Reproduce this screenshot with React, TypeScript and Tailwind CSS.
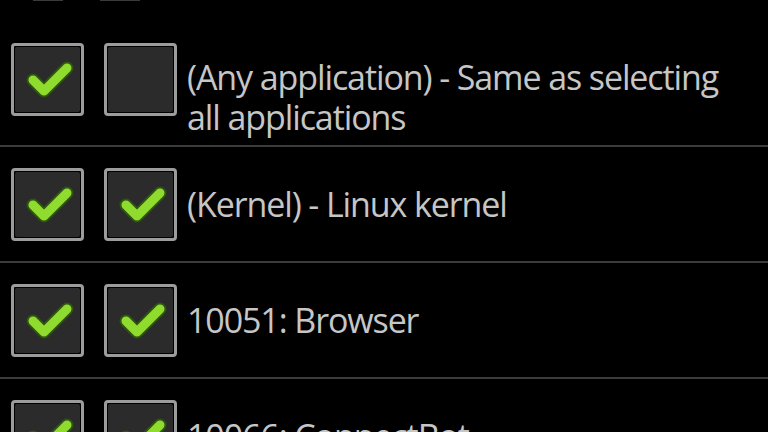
import React from "react";

const Check = () => (
  <svg viewBox="0 0 65 65" className="w-full h-full">
    <polyline
      points="18,33 29,44 52,21"
      fill="none"
      stroke="#2f5510"
      strokeWidth="13"
      strokeLinecap="round"
      strokeLinejoin="round"
    />
    <polyline
      points="18,33 29,44 52,21"
      fill="none"
      stroke="#8fdb2e"
      strokeWidth="9"
      strokeLinecap="round"
      strokeLinejoin="round"
    />
  </svg>
);

const Box = ({ checked }: { checked: boolean }) => (
  <div className="w-[73px] h-[73px] shrink-0 rounded-[4px] border-[3px] border-[#9c9c9c] bg-black p-[1px]">
    <div className="w-full h-full rounded-[2px] bg-[#2b2b2b]">{checked && <Check />}</div>
  </div>
);

const rows = [
  { a: true, b: true, text: ["(Kernel) - Linux kernel"] },
  { a: true, b: true, text: ["10051: Browser"] },
  { a: true, b: true, text: ["10066: ConnectBot"] },
];

export default function App() {
  return (
    <div
      className="w-[768px] h-[432px] overflow-hidden bg-black text-[#c6c6c6]"
      style={{ fontFamily: '"Open Sans", "DejaVu Sans", sans-serif' }}
    >
      {/* bits of the row above */}
      <div className="flex h-[13px] items-start">
        <div className="ml-[33px] w-[30px] h-[1px] bg-[#3a3a3a]" />
        <div className="ml-[37px] w-[40px] h-[1px] bg-[#3a3a3a]" />
      </div>

      {/* two-line row */}
      <div className="flex items-start pl-[11px] h-[132px]">
        <div className="mt-[30px] flex">
          <Box checked />
          <div className="w-[20px]" />
          <Box checked={false} />
        </div>
        <div className="ml-[10px] mt-[44px] text-[34px] leading-[40px] tracking-[-1.1px]">
          <div>(Any application) - Same as selecting</div>
          <div>all applications</div>
        </div>
      </div>
      <div className="h-[2px] bg-[#3c3c3c]" />

      {rows.map((r, i) => (
        <div key={i}>
          <div className="flex items-center pl-[11px] h-[114px]">
            <Box checked={r.a} />
            <div className="w-[20px]" />
            <Box checked={r.b} />
            <div className="ml-[10px] text-[34px] leading-[40px] tracking-[-1.1px]">{r.text[0]}</div>
          </div>
          <div className="h-[2px] bg-[#3c3c3c]" />
        </div>
      ))}
    </div>
  );
}
